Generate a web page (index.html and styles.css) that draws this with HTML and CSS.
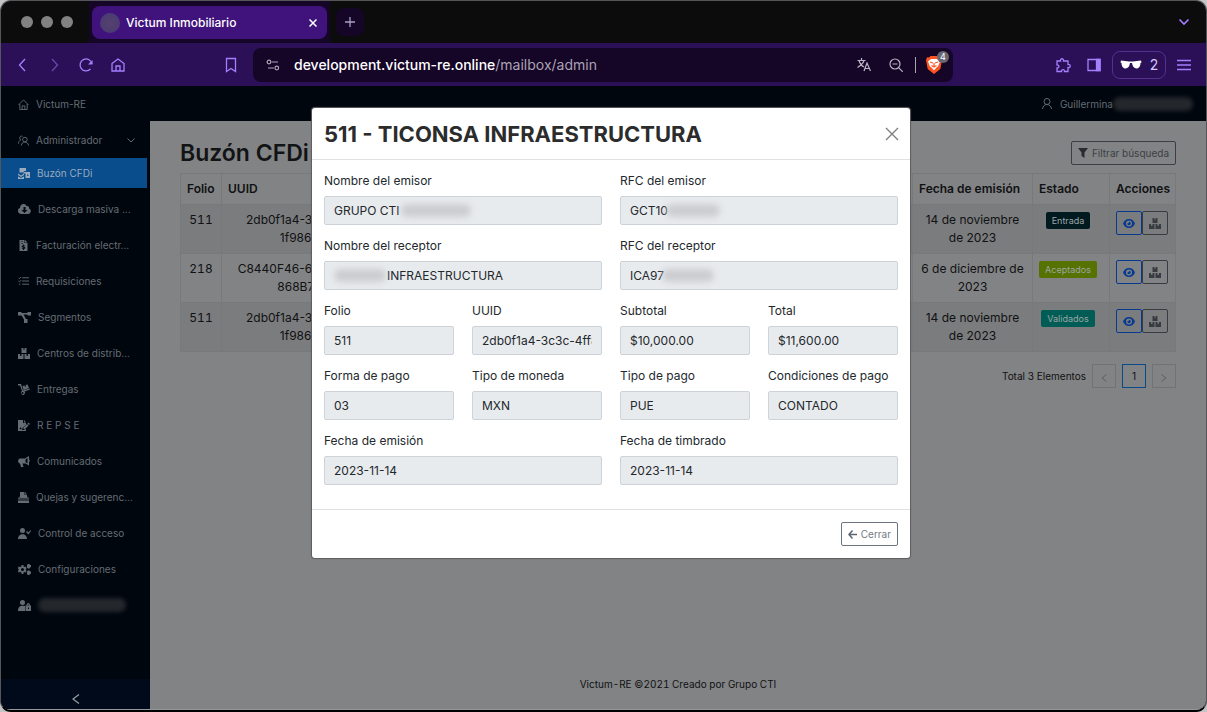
FILE: index.html
```html
<!DOCTYPE html>
<html lang="es">
<head>
<meta charset="utf-8">
<meta name="viewport" content="width=device-width, initial-scale=1">
<title>Victum Inmobiliario</title>
<link rel="stylesheet" href="styles.css">
</head>
<body>
<svg class="sprite" aria-hidden="true">
  <symbol id="boxes" viewBox="0 0 24 22"><path d="M7 0h4v4l1-1 1 1V0h4v10H7zM0 12h4v4l1.500-1L7 16v-4h4v10H0zM13 12h4v4l1.500-1 1.500 1v-4h4v10H13z"/></symbol>
  <symbol id="eye" viewBox="0 0 24 18"><path fill-rule="evenodd" d="M12 0C6 0 2 4 0 9c2 5 6 9 12 9s10-4 12-9c-2-5-6-9-12-9zm0 3a6 6 0 1 1 0 12 6 6 0 0 1 0-12zm0 2.500c0 2-1.500 3.500-3.500 3.500a3.500 3.500 0 1 0 3.500-3.500z"/></symbol>
</svg>
<div class="window">
  <div class="tabbar">
    <div class="lights"><i></i><i></i><i></i></div>
    <div class="tab-wrap"><div class="tab"><i class="favicon"></i><span class="tab-title">Victum Inmobiliario</span>
      <button class="plain" aria-label="Cerrar pestaña"><svg width="8" height="8" viewBox="0 0 8 8" fill="none" stroke="#fff" stroke-width="1.500"><path d="M.5.500l7 7M7.500.500l-7 7"/></svg></button></div></div>
    <button class="plain new-tab" aria-label="Nueva pestaña"><svg width="12" height="12" viewBox="0 0 12 12" stroke="#aaa0c8" stroke-width="1.300"><path d="M6 1v10M1 6h10"/></svg></button>
    <button class="plain tab-menu" aria-label="Buscar pestañas"><svg width="12" height="8" viewBox="0 0 12 8" fill="none" stroke="#a480ff" stroke-width="1.600"><path d="M1.500 1.500L6 6l4.500-4.500"/></svg></button>
  </div>
  <div class="toolbar">
    <div class="nav">
      <button class="plain" aria-label="Atrás"><svg width="16" height="16" viewBox="0 0 16 16"><path d="M11 2L5.500 8l5.500 6"/></svg></button>
      <button class="plain faded" aria-label="Adelante"><svg width="16" height="16" viewBox="0 0 16 16"><path d="M6 2l5.500 6L6 14"/></svg></button>
      <button class="plain" aria-label="Recargar"><svg width="16" height="16" viewBox="0 0 16 16"><path d="M12.500 12A6 6 0 1 1 14 7"/><path d="M14.500 3v4.500H10z" fill="#a480ff" stroke="none"/></svg></button>
      <button class="plain" aria-label="Inicio"><svg width="16" height="16" viewBox="0 0 16 16"><path d="M2 6.500L8 2l6 4.500V14H2zM6 14V9h4v5"/></svg></button>
      <button class="plain bookmark" aria-label="Marcador"><svg width="16" height="16" viewBox="0 0 16 16"><path d="M3.500 1.500h9v13L8 11.500l-4.500 3z"/></svg></button>
    </div>
    <div class="address">
      <svg width="14" height="14" viewBox="0 0 14 14" fill="none" stroke="#aaa5b5" stroke-width="1.200"><circle cx="3" cy="4" r="1.800"/><path d="M5.500 4H12M2 10h6"/><circle cx="10.800" cy="10" r="1.800"/></svg>
      <span class="url"><b>development.victum-re.online</b>/mailbox/admin</span>
      <svg width="14" height="14" viewBox="0 0 14 14" fill="none" stroke="#bcb5c8" stroke-width="1.200"><path d="M4.500 0v2M.5 2.500h8M2 2.500c1 3.500 3 5.500 5 6.500M7 2.500C6 6 3 8 .5 9.500M7 13l3-8 3.500 8M8 10.500h4.500"/></svg>
      <svg class="lens" width="14" height="14" viewBox="0 0 14 14" fill="none" stroke="#bcb5c8" stroke-width="1.200"><circle cx="6" cy="6" r="5"/><path d="M9.800 9.800l4 4M3.500 6h5"/></svg>
      <i class="divider"></i>
      <span class="shield"><svg width="16" height="18" viewBox="0 0 16 18"><path fill="#fb5422" d="M4.500 0h7L13 1.500l2-.3 1 3L14.300 13 8 18l-6.300-5L0 4.200l1-3 2 .3z"/><path fill="#fff" d="M5 3h6l3 2.500-2 5-1.500 1L8 14.500 5.500 11.500 4 10.500l-2-5z"/><path fill="none" stroke="#fb5422" stroke-width="1.200" d="M4 6l3 1M12 6L9 7M8 7v3M5.500 9.500L8 11l2.500-1.500"/></svg><span class="count">4</span></span>
    </div>
    <div class="tools">
      <button class="plain" aria-label="Extensiones"><svg width="16" height="16" viewBox="0 0 16 16"><path d="M2 4h3.500c-.7-3 3.700-3 3 0H13v3.500c3-.5 3 3.500 0 3V14.500H9.500c.5-2.500-3.500-2.500-3 0H2V11c2.500.3 2.500-3.500 0-3z"/></svg></button>
      <button class="plain" aria-label="Panel lateral"><svg width="14" height="14" viewBox="0 0 14 14"><path d="M1 1.500h12v11H1z"/><path d="M9.500 1.500H13v11H9.500z" fill="#a480ff"/></svg></button>
      <button class="plain private" aria-label="Ventana privada"><svg width="22" height="9" viewBox="0 0 22 9"><path fill="#fff" stroke="none" d="M1 .5l8 1h4l8-1 .5 2-1 .5c0 3-1.500 5.500-4 5.500S12.500 6 12 3h-2c-.5 3-2 5.500-4.500 5.500S1.500 6 1.500 3L.5 2.500z"/></svg>2</button>
      <button class="plain" aria-label="Menú"><svg width="14" height="12" viewBox="0 0 14 12"><path d="M0 1.500h14M0 6h14M0 10.500h14"/></svg></button>
    </div>
  </div>

  <div class="app">
    <aside class="sidebar">
      <nav class="menu">
        <a href="#"><svg class="line" width="11" height="11" viewBox="0 0 24 24"><path d="M1 13L12 2l11 11M4 11v12h16V11M9 23v-8h6v8"/></svg><span>Victum-RE</span></a>
        <a href="#" class="parent"><svg class="line" width="11" height="11" viewBox="0 0 24 24"><circle cx="15" cy="10" r="5"/><path d="M7 23c1-10 15-10 16 0M10 3C5 0 1 7 6 11c-3 1-5 4-5 8"/></svg><span>Administrador</span><svg class="line caret" width="8" height="5" viewBox="0 0 16 10"><path d="M1 1l7 7 7-7"/></svg></a>
        <a href="#" class="active"><svg width="12" height="11" viewBox="0 0 24 22"><path fill-rule="evenodd" d="M3 0h13v6h-3L9 9H3zm8 8h13v12h-9v-9h-4zM0 11l6 4 6-4v3l-6 4-6-4zm0 6l6 3 6-3v5H0zM18 12v4h4v-1h-3v-3z"/></svg><span>Buzón CFDi</span></a>
        <a href="#"><svg width="13" height="10" viewBox="0 0 26 20"><path fill-rule="evenodd" d="M7 20C-2 20-2 9 4 8 4 0 14-3 17 4c4-1 6 2 5 5 6 2 4 11-2 11zM11 6v6H7l6 6 6-6h-4V6z"/></svg><span>Descarga masiva ...</span></a>
        <a href="#"><svg width="11" height="11" viewBox="0 0 20 22"><path fill-rule="evenodd" d="M2 0h10v6h6v16H2zm11 0l5 5h-5zM5 3v1h4V3zm0 3v1h4V6zm4 3v2c-4 1-3 4 0 4 2 1 1 2-2 1v2h2v2h2v-2c4-1 3-4 0-4-2-1-1-2 2-1v-2h-2V9z"/></svg><span>Facturación electr...</span></a>
        <a href="#"><svg class="line" width="11" height="10" viewBox="0 0 24 20"><path d="M9 3h15M9 10h15M9 17h15M1 3l2 2 4-4M1 10l2 2 4-4M2 17h3"/></svg><span>Requisiciones</span></a>
        <a href="#"><svg width="13" height="11" viewBox="0 0 26 22"><path d="M0 0h7v2h12V0h7v7h-7V5h-8l5 9h3v8h-7v-7L7 7H0z"/></svg><span>Segmentos</span></a>
        <a href="#"><svg width="12" height="11"><use href="#boxes"/></svg><span>Centros de distrib...</span></a>
        <a href="#"><svg width="12" height="11" viewBox="0 0 24 22"><path fill-rule="evenodd" d="M0 0h6l4 13 13-4 1 2-11 4a4 4 0 1 1-5-1L4 3H0zm9 4l4-1 1 3 2-1-1-3 4-1 3 7-11 4zm0 12a2 2 0 1 0 2 2 2 2 0 0 0-2-2z"/></svg><span>Entregas</span></a>
        <a href="#"><svg width="12" height="11" viewBox="0 0 24 22"><path fill-rule="evenodd" d="M0 0h10v6h6v3l-7 7-1 4h3l5-2v4H0zm12 0l4 5h-4zm9 5l3 3-2 2-3-3zm-3 3l3 3-7 7h-3v-3zM3 17l3-3 1 4-3 1z"/></svg><span>R E P S E</span></a>
        <a href="#"><svg width="12" height="11" viewBox="0 0 24 22"><path fill-rule="evenodd" d="M22 0v7c2 1 2 4 0 5v7l-7-4H9l2 7H6L4 15c-5 0-5-9 0-10h10zm-3 4l-4 3v5l4 3z"/></svg><span>Comunicados</span></a>
        <a href="#"><svg width="11" height="11" viewBox="0 0 22 22"><path d="M4 0h9v6h5v6H4zm10 0l4 5h-4zM2 9h1v4h16V9h1l2 6H0zM0 17h22v5H0z"/></svg><span>Quejas y sugerenc...</span></a>
        <a href="#"><svg width="13" height="11" viewBox="0 0 26 22"><circle cx="9" cy="5" r="5"/><path d="M0 22c0-13 18-13 18 0zM16 8l2-2 3 3 4-5 1 2-5 7z"/></svg><span>Control de acceso</span></a>
        <a href="#"><svg width="13" height="11" viewBox="0 0 26 22"><path fill-rule="evenodd" d="M7 2h4v3l3 1 2-1 1 4-2 2 2 2-1 4-3-1-2 1v3H7v-3l-3-1-3 1-1-4 2-2-2-2 1-4 3 1 3-1zm2 6a3 3 0 1 0 0 6 3 3 0 0 0 0-6zM20 0h3l1 2h2v4l-2 1-1 2h-3l-2-2V2zm0 13h3l1 2h2v4l-2 1-1 2h-3l-2-2v-5z"/></svg><span>Configuraciones</span></a>
        <a href="#" aria-label="Administración"><svg width="13" height="11" viewBox="0 0 26 22"><path fill-rule="evenodd" d="M9 0a5 5 0 1 1 0 10A5 5 0 0 1 9 0zM0 22c0-10 6-12 14-10v10zm16-11h1c0-7 7-7 7 0h2v11H15V11zm3 0h3c0-3-3-3-3 0zm1 4v3h2v-3z"/></svg><i class="smudge smudge-menu"></i></a>
      </nav>
      <button class="plain collapse" aria-label="Contraer menú"><svg width="8" height="10" viewBox="0 0 8 10" fill="none" stroke="#999da3" stroke-width="1.200"><path d="M7 .5L1 5l6 4.500"/></svg></button>
    </aside>
    <div class="main">
      <header class="userbar"><svg class="line" width="10" height="11" viewBox="0 0 20 22"><circle cx="10" cy="7" r="6"/><path d="M1 22c1-12 17-12 18 0"/></svg><span>Guillermina</span><i class="smudge smudge-user"></i></header>
      <main class="content">
        <div class="heading"><h1>Buzón CFDi</h1><button class="outline filter"><svg width="10" height="10" viewBox="0 0 20 20"><path fill="#292d31" d="M0 0h20l-7 9v11l-6-4V9z"/></svg>Filtrar búsqueda</button></div>
        <table>
          <colgroup><col class="c-folio"><col class="c-uuid"><col><col class="c-date"><col class="c-state"><col class="c-actions"></colgroup>
          <thead><tr><th>Folio</th><th>UUID</th><th></th><th>Fecha de emisión</th><th>Estado</th><th>Acciones</th></tr></thead>
          <tbody>
            <tr><td class="folio">511</td><td>2db0f1a4-3c3c-4ff8-<br>1f986000</td><td></td><td>14 de noviembre de 2023</td><td><span class="tag entrada">Entrada</span></td><td><div class="actions"><button class="view" aria-label="Ver"><svg width="12" height="9"><use href="#eye"/></svg></button><button aria-label="Centros"><svg width="12" height="11"><use href="#boxes"/></svg></button></div></td></tr>
            <tr><td class="folio">218</td><td>C8440F46-6000-4000-<br>868B7000</td><td></td><td>6 de diciembre de 2023</td><td><span class="tag aceptados">Aceptados</span></td><td><div class="actions"><button class="view" aria-label="Ver"><svg width="12" height="9"><use href="#eye"/></svg></button><button aria-label="Centros"><svg width="12" height="11"><use href="#boxes"/></svg></button></div></td></tr>
            <tr><td class="folio">511</td><td>2db0f1a4-3c3c-4ff8-<br>1f986000</td><td></td><td>14 de noviembre de 2023</td><td><span class="tag validados">Validados</span></td><td><div class="actions"><button class="view" aria-label="Ver"><svg width="12" height="9"><use href="#eye"/></svg></button><button aria-label="Centros"><svg width="12" height="11"><use href="#boxes"/></svg></button></div></td></tr>
          </tbody>
        </table>
        <div class="pager"><span>Total 3 Elementos</span>
          <button aria-label="Anterior"><svg width="6" height="8" viewBox="0 0 6 8"><path d="M5.500.500L1 4l4.500 3.500"/></svg></button>
          <button class="current">1</button>
          <button aria-label="Siguiente"><svg width="6" height="8" viewBox="0 0 6 8"><path d="M.5.500L5 4 .5 7.500"/></svg></button></div>
      </main>
      <footer class="credits">Victum-RE ©2021 Creado por Grupo CTI</footer>
    </div>

    <div class="overlay">
      <section class="modal" role="dialog" aria-labelledby="modal-title">
        <header><h2 id="modal-title">511 - TICONSA INFRAESTRUCTURA</h2><button class="plain" aria-label="Cerrar"><svg width="14" height="14" viewBox="0 0 14 14" stroke="#808080" stroke-width="1.400"><path d="M1 1l12 12M13 1L1 13"/></svg></button></header>
        <form class="fields">
          <div class="field wide"><label for="f1">Nombre del emisor</label><input id="f1" readonly value="GRUPO CTI"><i class="smudge s1"></i></div>
          <div class="field wide"><label for="f2">RFC del emisor</label><input id="f2" readonly value="GCT10"><i class="smudge s2"></i></div>
          <div class="field wide"><label for="f3">Nombre del receptor</label><input id="f3" class="indented" readonly value="INFRAESTRUCTURA"><i class="smudge s3"></i></div>
          <div class="field wide"><label for="f4">RFC del receptor</label><input id="f4" readonly value="ICA97"><i class="smudge s4"></i></div>
          <div class="field"><label for="f5">Folio</label><input id="f5" readonly value="511"></div>
          <div class="field"><label for="f6">UUID</label><input id="f6" readonly value="2db0f1a4-3c3c-4ff8"></div>
          <div class="field"><label for="f7">Subtotal</label><input id="f7" readonly value="$10,000.00"></div>
          <div class="field"><label for="f8">Total</label><input id="f8" readonly value="$11,600.00"></div>
          <div class="field"><label for="f9">Forma de pago</label><input id="f9" readonly value="03"></div>
          <div class="field"><label for="f10">Tipo de moneda</label><input id="f10" readonly value="MXN"></div>
          <div class="field"><label for="f11">Tipo de pago</label><input id="f11" readonly value="PUE"></div>
          <div class="field"><label for="f12">Condiciones de pago</label><input id="f12" readonly value="CONTADO"></div>
          <div class="field wide"><label for="f13">Fecha de emisión</label><input id="f13" readonly value="2023-11-14"></div>
          <div class="field wide"><label for="f14">Fecha de timbrado</label><input id="f14" readonly value="2023-11-14"></div>
        </form>
        <footer><button class="outline close"><svg width="9" height="9" viewBox="0 0 18 18" fill="none" stroke="#5c6670" stroke-width="3"><path d="M9 1L2 9l7 8M2 9h16"/></svg>Cerrar</button></footer>
      </section>
    </div>
  </div>
</div>
</body>
</html>
```
FILE: styles.css
```css
* { box-sizing: border-box; }
body { margin: 0; background: #c4c4c6; font-family: Inter, Roboto, sans-serif; font-size: 12px; line-height: 18px; color: #101112; }
button, input { font: inherit; color: inherit; margin: 0; }
i { display: block; }
svg { display: block; flex: none; }
.sprite { position: absolute; width: 0; height: 0; }
.plain { display: flex; align-items: center; justify-content: center; padding: 0; border: 0; background: none; }

.window { display: flex; flex-direction: column; min-height: 100vh; border: 1px solid #55555a; border-bottom: 2px solid #000; border-radius: 11px; overflow: hidden; background: #0c0c0c; }
.tabbar { display: flex; align-items: center; height: 42px; padding-left: 20px; }
.lights { display: flex; gap: 8px; margin-right: 16px; }
.lights i { width: 12px; height: 12px; border-radius: 50%; background: #828282; }
.tab-wrap { width: 241px; padding: 5px 3px 4px; background: #150527; }
.tab { display: flex; align-items: center; gap: 6px; height: 33px; padding: 0 10px 0 8px; border-radius: 8px; background: #40137c; color: #fff; }
.tab-title { flex: 1; font-weight: 500; }
.favicon { width: 20px; height: 20px; border-radius: 50%; background: radial-gradient(#59406f, #4b3d72 60%, #4c3b72); }
.new-tab { width: 28px; height: 28px; margin-left: 6px; border-radius: 8px; background: #150527; }
.tab-menu { margin: 0 16px 0 auto; }

.toolbar { display: flex; align-items: center; height: 43px; background: #2b0f57; }
.toolbar .plain svg { fill: none; stroke: #a480ff; stroke-width: 1.3; }
.nav { display: flex; gap: 16px; width: 252px; padding: 0 14px 0 13px; }
.nav .faded { opacity: .5; }
.nav .bookmark { margin-left: auto; }
.address { display: flex; align-items: center; height: 34px; flex: 0 1 700px; padding: 0 5px 0 13px; border-radius: 8px; background: #150527; }
.url { flex: 1; margin-left: 14px; font-size: 14px; color: #aaa3b4; white-space: nowrap; }
.url b { font-weight: 500; color: #fff; }
.lens { margin-left: 18px; }
.divider { width: 1px; height: 16px; margin: 0 10px 0 12px; background: #aaa3b4; }
.shield { position: relative; padding-right: 6px; }
.count { position: absolute; top: -5px; right: -1px; width: 12px; height: 12px; border-radius: 6px; background: #686671; color: #fff; font-size: 9px; line-height: 12px; text-align: center; }
.tools { display: flex; align-items: center; justify-content: flex-end; gap: 16px; flex: 1; padding-right: 15px; }
.private { gap: 8px; width: 54px; height: 28px; margin: 0 -5px; border: 1px solid #55308f; border-radius: 8px; color: #d5c7ff; font-size: 14px; }

.app { position: relative; display: flex; flex: 1; border-bottom: 1px solid #96979a; background: #828385; }
.line { fill: none; stroke: currentColor; stroke-width: 2; }
.sidebar { display: flex; flex-direction: column; width: 149px; background: #00060e; }
.menu { display: flex; flex-direction: column; gap: 6px; flex: 1; width: 146px; padding-top: 3px; font-size: 10px; color: #666c73; }
.menu a { display: flex; align-items: center; gap: 7px; height: 30px; padding: 0 12px 0 17px; color: inherit; text-decoration: none; white-space: nowrap; }
.menu svg { fill: currentColor; }
.menu .line { fill: none; }
.menu .parent { margin-bottom: -3px; }
.menu .caret { margin-left: auto; }
.menu .active { background: #094d8d; color: #9aabbd; }
.collapse { height: 30px; background: #000a1a; padding-top: 10px; }
.main { display: flex; flex-direction: column; flex: 1; min-width: 0; }
.userbar { display: flex; align-items: center; justify-content: flex-end; height: 35px; padding-right: 13px; background: #00060e; color: #666c73; font-size: 10px; }
.userbar svg { margin-right: 8px; }
.smudge { border-radius: 8px; filter: blur(2px); }
.smudge-user { width: 80px; height: 14px; background: #24282d; }
.smudge-menu { width: 88px; height: 14px; background: #24282d; }

.content { flex: 1; padding: 19px 30px; }
.heading { display: flex; align-items: center; justify-content: space-between; margin-bottom: 7px; }
h1, h2 { margin: 0; line-height: 26px; }
h1 { font-size: 23px; font-weight: 600; color: #121314; }
h2 { font-size: 22px; font-weight: 700; color: #2c2c2c; }
.outline { display: flex; align-items: center; gap: 4px; height: 24px; padding: 0 6px; border: 1px solid #3a3f44; border-radius: 2px; background: none; font-size: 10px; color: #3a3f44; }
table { width: 100%; table-layout: fixed; border-collapse: collapse; }
th, td { border: 1px solid #77797b; padding: 6px; vertical-align: top; }
th { padding-right: 0; text-align: left; font-weight: 600; white-space: nowrap; }
td { text-align: center; }
.folio { font-variant-numeric: tabular-nums; }
tbody tr:nth-child(odd) { background: #7b7c7e; }
.c-folio { width: 41px; }
.c-uuid { width: 171px; }
.c-date { width: 120px; }
.c-state { width: 77px; }
.c-actions { width: 66px; }
.tag { display: inline-block; margin-right: 6px; padding: 0 6px; border-radius: 2px; font-size: 9px; line-height: 17px; color: #9da5a5; }
.entrada { background: #001a20; }
.aceptados { background: #567200; }
.validados { background: #005c55; }
.actions { display: flex; }
.actions button { display: flex; align-items: center; justify-content: center; width: 26px; height: 24px; padding: 0; border: 1px solid #373c42; border-radius: 2px; background: none; }
.actions svg { fill: #373c42; }
.actions .view { border-color: #063a91; }
.actions .view svg { fill: #063a91; }
.pager { display: flex; justify-content: flex-end; align-items: center; gap: 6px; margin-top: 12px; font-size: 10px; }
.pager button { display: flex; align-items: center; justify-content: center; width: 24px; height: 24px; padding: 4px 0 0; border: 1px solid #707274; background: none; }
.pager button svg { fill: none; stroke: #5c5e60; }
.pager .current { padding: 0; border-color: #064a87; }
.credits { padding: 16px 0; font-size: 10px; text-align: center; font-variant-numeric: tabular-nums; }

.overlay { position: absolute; inset: 0; display: flex; justify-content: center; align-items: flex-start; padding: 22px 0 0 15px; }
.modal { width: 598px; border-radius: 3px; background: #fff; color: #23282d; box-shadow: 0 0 1px 1px #5c5d5f; }
.modal header { display: flex; align-items: center; justify-content: space-between; height: 52px; padding: 0 11px 0 12px; border-bottom: 1px solid #dee0e3; }
.fields { display: grid; grid-template-columns: repeat(4, minmax(0, 1fr)); gap: 12px 18px; padding: 12px 12px 24px; }
.field { position: relative; display: flex; flex-direction: column; gap: 6px; }
.wide { grid-column: span 2; }
.field input { width: 100%; height: 29px; padding: 0 9px; border: 1px solid #ced2d9; border-radius: 2px; background: #e8ebee; outline: 0; }
.field .indented { padding-left: 62px; }
.field .smudge { position: absolute; top: 32px; height: 13px; background: #cbcdd0; filter: blur(3px); }
.s1 { left: 77px; width: 70px; }
.s2 { left: 46px; width: 54px; }
.s3 { left: 10px; width: 52px; }
.s4 { left: 42px; width: 52px; }
.modal footer { display: flex; justify-content: flex-end; padding: 12px; border-top: 1px solid #dee0e3; }
.close { color: #727a82; border-color: #6c757d; }
```
